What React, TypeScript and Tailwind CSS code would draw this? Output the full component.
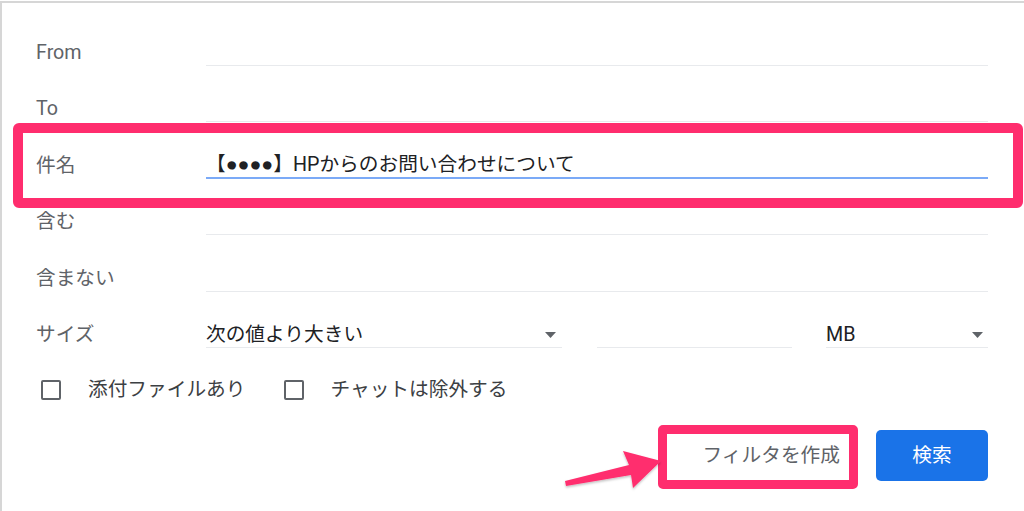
const font = {
  fontFamily:
    '"Roboto", "Liberation Sans", "Noto Sans CJK JP", sans-serif',
};

function Caret() {
  return (
    <svg width="11" height="6" viewBox="0 0 11 6" className="shrink-0">
      <polygon points="0,0 11,0 5.5,6" fill="#5f6368" />
    </svg>
  );
}

function TextRow({ label, value, active }: { label: string; value?: string; active?: boolean }) {
  return (
    <div className="flex items-end h-[56.5px]">
      <div className="w-[170px] h-[26px] leading-[25px] border-b border-transparent text-[#5f6368]">
        {label}
      </div>
      <div
        className={
          active
            ? "flex-1 h-[27px] leading-[25px] border-b-2 border-[#7baaf7] text-[#202124]"
            : "flex-1 h-[26px] leading-[25px] border-b border-[#e8eaed] text-[#202124]"
        }
      >
        {value}
      </div>
    </div>
  );
}

function Checkbox({ label, className }: { label: string; className?: string }) {
  return (
    <div className={`flex items-center ${className ?? ""}`}>
      <div className="w-[20px] h-[20px] border-2 border-[#5f6368] rounded-[2px]" />
      <span className="ml-[27px] text-[#3c4043] leading-[20px]">{label}</span>
    </div>
  );
}

export default function App() {
  return (
    <div className="relative w-[1024px] h-[511px] bg-white overflow-hidden text-[19.7px]" style={font}>
      <div className="mt-px h-[510px] border-t-2 border-l-2 border-[#d6d6d6] pl-[34px] pr-[36px] pt-[6px]">
        <TextRow label="From" />
        <TextRow label="To" />
        <TextRow label="件名" value="【●●●●】HPからのお問い合わせについて" active />
        <TextRow label="含む" />
        <TextRow label="含まない" />

        <div className="flex items-end h-[56.5px]">
          <div className="w-[170px] h-[26px] leading-[25px] border-b border-transparent text-[#5f6368]">
            サイズ
          </div>
          <div className="w-[356px] h-[26px] border-b border-[#e8eaed] flex items-center justify-between pr-[6px]">
            <span className="leading-[25px] text-[#202124]">次の値より大きい</span>
            <Caret />
          </div>
          <div className="w-[195px] ml-[35px] h-[26px] border-b border-[#e8eaed]" />
          <div className="flex-1 ml-[34px] h-[26px] border-b border-[#e8eaed] flex items-center justify-between pr-[5px]">
            <span className="leading-[25px] text-[#202124]">MB</span>
            <Caret />
          </div>
        </div>

        <div className="flex items-center h-[20px] mt-[32px]">
          <Checkbox label="添付ファイルあり" className="ml-[5px]" />
          <Checkbox label="チャットは除外する" className="ml-[38px]" />
        </div>

        <div className="flex justify-end items-center mt-[30px] gap-[36px]">
          <span className="text-[#5f6368]">フィルタを作成</span>
          <button className="w-[112px] h-[51px] rounded-[5px] bg-[#1a73e8] text-white">
            検索
          </button>
        </div>
      </div>

      {/* annotations */}
      <div className="absolute left-[13px] top-[123px] w-[1010px] h-[85px] border-[10px] border-[#ff2d6e] rounded-[6px]" />
      <div className="absolute left-[658px] top-[425px] w-[200px] h-[64px] border-[9px] border-[#ff2d6e] rounded-[5px]" />
      <svg
        className="absolute left-0 top-0"
        width="1024"
        height="511"
        viewBox="0 0 1024 511"
      >
        <defs>
          <filter id="sh" x="-10%" y="-20%" width="130%" height="160%">
            <feDropShadow dx="0" dy="1.5" stdDeviation="1.2" floodColor="#000" floodOpacity="0.25" />
          </filter>
        </defs>
        <polygon
          points="565,481 629,465 623,451 661,461 633,488 631,475 566,486"
          fill="#ff2d6e"
          filter="url(#sh)"
        />
      </svg>
    </div>
  );
}
